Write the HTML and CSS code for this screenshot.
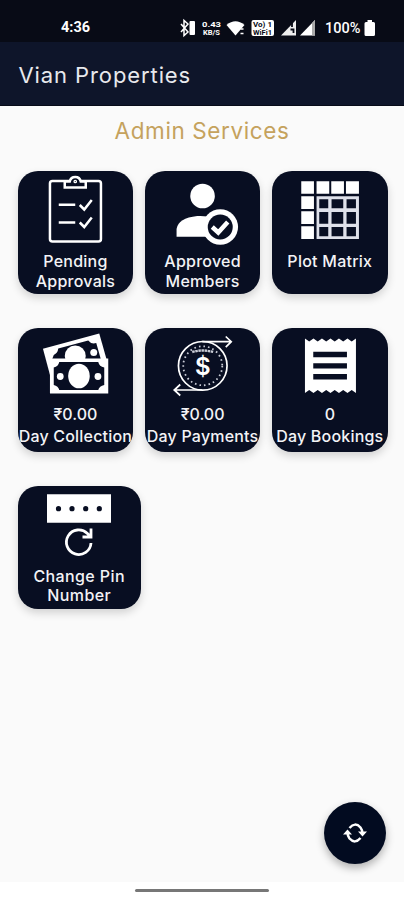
FILE: index.html
```
<!DOCTYPE html>
<html lang="en">
<head>
<meta charset="utf-8">
<title>Vian Properties</title>
<link rel="stylesheet" href="styles.css">
</head>
<body>
<div class="status">
  <span class="time">4:36</span>
  <svg class="signals" width="142" height="20" viewBox="0 0 142 20">
    <path d="M1 6l7 8-4 3.500V2.500l4 3.500-7 8" fill="none" stroke="#fff" stroke-width="1.500"/>
    <rect x="9.500" y="3" width="5.500" height="14" rx="1" fill="#fff"/>
    <text x="22" y="8.500" class="tiny" textLength="19" lengthAdjust="spacingAndGlyphs">0.43</text>
    <text x="23" y="17" class="tiny" textLength="17" lengthAdjust="spacingAndGlyphs">KB/S</text>
    <path d="M46.500 7Q55.500-.500 64.500 7L55.500 17.500Z" fill="#fff"/>
    <path d="M60.500 11h3m-3 4.500h3" stroke="#fff" stroke-width="1.500"/>
    <rect x="71.500" y="2" width="22.500" height="16" rx="2" fill="#fff"/>
    <text x="73" y="8.500" class="tiny dark" textLength="19" lengthAdjust="spacingAndGlyphs">Vo) 1</text>
    <text x="73" y="17" class="tiny dark" textLength="19" lengthAdjust="spacingAndGlyphs">WiFi1</text>
    <path d="M101 17.500 116 2v15.500Z" fill="#eee"/>
    <path d="M110.500 11.500h3v3.500M112 5v4" stroke="#080b16" stroke-width="1.800" fill="none"/>
    <path d="M120 17.500 135 2v15.500Z" fill="#fff"/>
    <path d="M132 5 135 2v15.500h-3Z" fill="#aaa"/>
  </svg>
  <span class="percent">100%</span>
  <svg class="battery" width="12" height="18" viewBox="0 0 12 18"><path d="M3.500 1h4.500v2h1.500q1.500 0 1.500 1.500v11q0 1.500-1.500 1.500h-7.500q-1.500 0-1.500-1.500v-11q0-1.500 1.500-1.500h1.500Z" fill="#fff"/></svg>
</div>
<header class="appbar"><h1>Vian Properties</h1></header>
<main>
  <h2>Admin Services</h2>
  <div class="grid">
    <section class="card">
      <svg viewBox="0 0 115 79" class="icon line">
        <rect x="31.700" y="10" width="51" height="60.500" rx="2.500" stroke-width="2.500"/>
        <path d="M46.500 16.500v-6h5q1-4.500 5.500-4.500t5.500 4.500h5v6Z" fill="#080e22" stroke-width="2.500"/>
        <circle cx="57" cy="10.500" r="1.200" stroke-width="1.300"/>
        <path d="M40.500 33.700H57M40.500 51.500H57M61.500 34l4.500 4.500 7.500-9.500M61.500 51.500l4.500 4.500 7.500-9.500" stroke-width="2.500"/>
      </svg>
      <p>Pending<br>Approvals</p>
    </section>
    <section class="card">
      <svg viewBox="0 0 115 79" class="icon">
        <circle cx="57.300" cy="25" r="12.300"/>
        <path d="M31.300 65.700V58Q33 47 52 45q9-.500 17 2L66 65.700Z"/>
        <circle cx="75" cy="56" r="17.800"/>
        <circle cx="75" cy="56" r="12.500" class="cut"/>
        <path d="M67 56l6 5.500 9.500-10.500" fill="none" stroke="#fff" stroke-width="4.500"/>
      </svg>
      <p>Approved<br>Members</p>
    </section>
    <section class="card">
      <svg viewBox="0 0 115 79" class="icon">
        <path d="M29 10.300h12.700v12.400H29zM44.300 10.300H57v12.400H44.300zM59 10.300h12.700v12.400H59zM73.700 10.300h13v12.400h-13zM29 25.300h12.700V38H29zM29 40.300h12.700V53H29zM29 55.300h12.700V68H29z"/>
        <path d="M44.300 25.300h42.400V68H44.300z" fill="#dfe1ea"/>
        <path class="cut" d="M47 28.300h9v9h-9zM59.300 28.300H71v9H59.300zM74.300 28.300h9.400v9h-9.400zM47 41h9v11.700h-9zM59.300 41H71v11.700H59.300zM74.300 41h9.400v11.700h-9.400zM47 56h9v9.300h-9zM59.300 56H71v9.300H59.300zM74.300 56h9.400v9.300h-9.400z"/>
      </svg>
      <p>Plot Matrix</p>
    </section>
    <section class="card stat">
      <svg viewBox="0 0 115 79" class="icon">
        <path d="M24.700 20.800 81 5.500 88.500 32 32 48Z"/>
        <path class="cut" d="M35.500 27q4-2 4.500-6.500L70 12.500q3 4 8 2.500L82.500 31H34Z"/>
        <circle cx="57" cy="28" r="10.500"/><circle cx="75.500" cy="24.500" r="3.500"/>
        <path d="M31.700 30.500H90v35H31.700z"/>
        <path class="cut" d="M41 34h39q1 4.500 6 5.500V57q-5 1-6 5H41q-1-4-5.500-5V39.500Q40 38.500 41 34Z"/>
        <ellipse cx="60.700" cy="48" rx="10.800" ry="12.300"/><circle cx="42" cy="48.500" r="3.400"/><circle cx="79.700" cy="48.500" r="3.400"/>
      </svg>
      <p class="tight">₹0.00<br><span>Day Collection</span></p>
    </section>
    <section class="card stat">
      <svg viewBox="0 0 115 79" class="icon line">
        <circle cx="57.500" cy="37.800" r="24.300" stroke-width="1.700"/>
        <circle cx="57.500" cy="37.800" r="19.500" stroke="#c9ccd6" stroke-width="1.800" stroke-dasharray="1.600 3"/>
        <path d="M57 13.700h29M80.500 8.500l5.500 5.200-5.500 5.500M57 62H29M35 56.500 29 62l6 5.500" stroke-width="1.700"/>
        <path d="M47 24q10.500-3 21 0" stroke="#c9ccd6" stroke-width="2.400" stroke-dasharray="2.500 .6"/>
        <text x="57.500" y="46.500" class="dollar">$</text>
      </svg>
      <p class="tight">₹0.00<br><span>Day Payments</span></p>
    </section>
    <section class="card stat">
      <svg viewBox="0 0 115 79" class="icon">
        <path d="M32.700 10.500l4.250 3 4.250-3 4.250 3 4.250-3 4.250 3 4.250-3 4.250 3 4.250-3 4.250 3 4.250-3 4.250 3 4.250-3V65l-4.250-3-4.250 3-4.250-3-4.250 3-4.250-3-4.250 3-4.250-3-4.250 3-4.250-3-4.250 3-4.250-3-4.250 3Z"/>
        <path class="cut" d="M41 23.800h33.700v5.400H41zM41 35.200h33.700v5.300H41zM41 46h33.700v5.400H41z"/>
      </svg>
      <p class="tight">0<br><span>Day Bookings</span></p>
    </section>
    <section class="card pin">
      <svg viewBox="0 0 123 79" class="icon">
        <path d="M29 8.300h64v28.400H29z"/>
        <g class="cut"><circle cx="40.500" cy="22.700" r="2.600"/><circle cx="54" cy="22.700" r="2.600"/><circle cx="67.700" cy="22.700" r="2.600"/><circle cx="81.300" cy="22.700" r="2.600"/></g>
        <path d="M73 57a12.300 12.300 0 1 1-3.600-9.500l3 3M73 42.500v8.500h-8.500" fill="none" stroke="#fff" stroke-width="2.800"/>
      </svg>
      <p>Change Pin<br>Number</p>
    </section>
  </div>
  <button class="fab" aria-label="Refresh">
    <svg width="26" height="22" viewBox="0 0 26 22"><path d="M7.500 6Q13-.500 18.500 5.500 20.500 8 20.500 12M18.500 16Q13 22.500 7.500 16.500 5.500 14 5.500 10" fill="none" stroke="#fff" stroke-width="2.500"/><path d="M16 9.500h9l-4.500 5zM1 12.500h9L5.500 7.500z" fill="#fff"/></svg>
  </button>
</main>
<footer><i></i></footer>
</body>
</html>
```
FILE: styles.css
```
* { box-sizing: border-box; }
body { margin: 0; width: 404px; height: 900px; overflow: hidden; background: #fafafa; font-family: Inter, "Noto Sans", sans-serif; display: flex; flex-direction: column; position: relative; }
.status { height: 42px; background: #080b16; color: #fff; display: flex; align-items: center; padding-top: 13px; flex: none; }
.time { margin-left: 61px; width: 119px; font: 700 14.500px Roboto, sans-serif; }
.signals { flex: none; }
.percent { font: 500 14.500px Roboto, sans-serif; margin-left: 3px; width: 39px; padding-top: 2px; }
.tiny { font: 700 7px Roboto, sans-serif; fill: #fff; }
.dark { fill: #080b16; }
.appbar { height: 64px; flex: none; background: #0e152a; border-bottom: 1px solid #070b18; display: flex; align-items: center; padding: 2px 0 0 18.500px; }
h1 { margin: 0; font-size: 22px; font-weight: 400; color: #e8e9ed; letter-spacing: .9px; white-space: nowrap; }
main { flex: 1; }
h2 { margin: 0; height: 65px; padding-top: 11px; font-size: 22.500px; line-height: 28px; font-weight: 400; color: #c5a25d; text-align: center; letter-spacing: .6px; }
.grid { display: grid; grid-template-columns: repeat(3, 115.500px); column-gap: 11.700px; row-gap: 34.200px; padding-left: 17.700px; }
.card { height: 123.300px; border-radius: 20px; background: #080e22; color: #f3f3f6; box-shadow: 0 4px 9px rgba(0,0,0,.16); overflow: hidden; }
.card.pin { width: 123px; }
.icon { display: block; width: 100%; height: 79px; fill: #fff; }
.line { fill: none; stroke: #fff; }
.cut { fill: #080e22; }
.dollar { font: 600 24px Inter, sans-serif; fill: #fff; stroke: none; text-anchor: middle; }
.card p { margin: 2px -5px 0; font-size: 16px; line-height: 19.500px; font-weight: 500; text-align: center; white-space: nowrap; letter-spacing: .25px; }
.card.pin p { letter-spacing: .4px; }
.card.stat p { margin-top: -3px; line-height: 21.500px; letter-spacing: 0; }
.card.stat span { letter-spacing: .2px; }
.fab { position: absolute; left: 324px; top: 802px; width: 62px; height: 62px; border: 0; border-radius: 50%; background: #020b20; display: flex; align-items: center; justify-content: center; box-shadow: 0 4px 8px rgba(0,0,0,.3); padding: 0; }
footer { height: 18px; background: #fff; display: flex; justify-content: center; padding-top: 7px; flex: none; }
footer i { width: 134px; height: 3px; border-radius: 2px; background: #777; }
```
